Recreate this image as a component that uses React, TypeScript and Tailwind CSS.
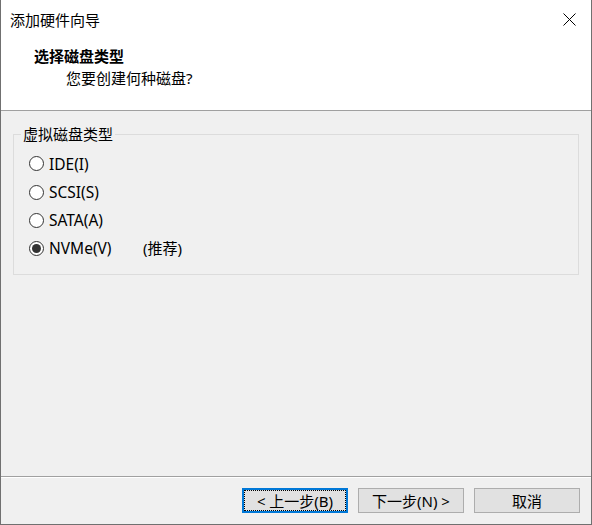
import React, { useState } from 'react'

const options = [
  { id: 'ide', label: 'IDE(I)', h: 'h-[29px]' },
  { id: 'scsi', label: 'SCSI(S)', h: 'h-[28px]' },
  { id: 'sata', label: 'SATA(A)', h: 'h-[28px]' },
  { id: 'nvme', label: 'NVMe(V)', h: 'h-[28px]', note: '(推荐)' }
]

function Radio({ checked }: { checked: boolean }) {
  return (
    <span className="flex h-[15px] w-[15px] shrink-0 items-center justify-center rounded-full border border-[#333333] bg-white">
      {checked && <span className="h-[9px] w-[9px] rounded-full bg-[#333333]" />}
    </span>
  )
}

export default function App() {
  const [disk, setDisk] = useState('nvme')

  return (
    <div className="flex h-[525px] w-[592px] flex-col border-x border-b border-[#707070] bg-[#f0f0f0] font-['Noto_Sans','Noto_Sans_CJK_SC',sans-serif] text-[15px] text-black">
      {/* Header */}
      <div className="h-[111px] shrink-0 border-b border-[#a0a0a0] bg-white">
        <div className="flex h-[39px] items-center justify-between pl-[9px] pr-[15px]">
          <span className="leading-[20px]">添加硬件向导</span>
          <svg width="13" height="13" viewBox="0 0 13 13" className="text-black">
            <path d="M0.5 0.5L12.5 12.5M12.5 0.5L0.5 12.5" stroke="currentColor" strokeWidth="1" fill="none" />
          </svg>
        </div>
        <div className="mt-[7px] pl-[33px] font-bold leading-[20px]">选择磁盘类型</div>
        <div className="mt-[2px] pl-[65px] leading-[20px]">您要创建何种磁盘?</div>
      </div>

      {/* Body */}
      <div className="flex-1 px-[12px] pt-[14px]">
        <fieldset className="border border-[#dcdcdc] pb-[12px]">
          <legend className="ml-[7px] px-[2px] leading-[18px]">虚拟磁盘类型</legend>
          <div className="mt-[6px] flex flex-col pl-[15px]">
            {options.map((o) => (
              <label key={o.id} className={`flex ${o.h} cursor-default items-center`} onClick={() => setDisk(o.id)}>
                <Radio checked={disk === o.id} />
                <span className="ml-[5px] w-[94px] text-[15.5px] leading-[20px]">{o.label}</span>
                {o.note && <span className="leading-[20px]">{o.note}</span>}
              </label>
            ))}
          </div>
        </fieldset>
      </div>

      {/* Footer */}
      <div className="shrink-0 border-t border-[#a0a0a0]">
        <div className="h-px bg-white" />
        <div className="flex h-[46px] justify-end gap-[10px] pr-[11px] pt-[10px]">
          <button className="h-[25px] w-[106px] border-2 border-[#0078d7] bg-[#e1e1e1] leading-[20px] outline-1 outline-offset-[-3px] outline-black outline-dotted">
            &lt; 上一步(B)
          </button>
          <button className="h-[25px] w-[106px] border border-[#adadad] bg-[#e1e1e1] leading-[20px]">
            下一步(N) &gt;
          </button>
          <button className="h-[25px] w-[106px] border border-[#adadad] bg-[#e1e1e1] leading-[20px]">
            取消
          </button>
        </div>
      </div>
    </div>
  )
}
